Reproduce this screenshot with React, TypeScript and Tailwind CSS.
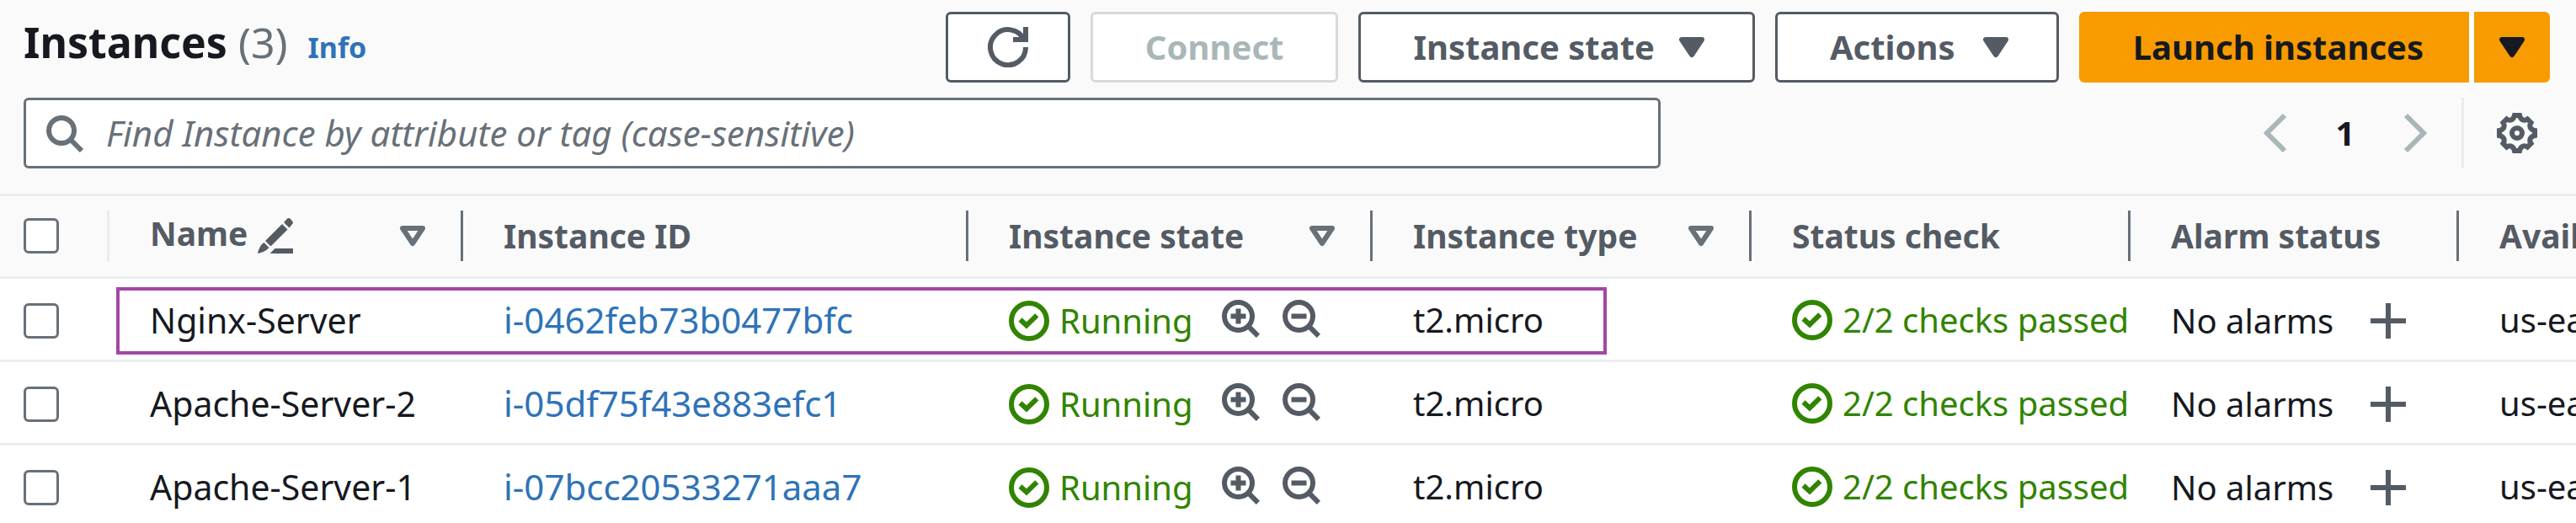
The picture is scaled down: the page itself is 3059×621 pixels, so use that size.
import type { ReactNode } from "react";

type Instance = { name: string; id: string };

const instances: Instance[] = [
  { name: "Nginx-Server", id: "i-0462feb73b0477bfc" },
  { name: "Apache-Server-2", id: "i-05df75f43e883efc1" },
  { name: "Apache-Server-1", id: "i-07bcc20533271aaa7" },
];

function Icon({ children, className = "" }: { children: ReactNode; className?: string }) {
  return (
    <svg
      viewBox="0 0 16 16"
      className={`size-12 shrink-0 ${className}`}
      fill="none"
      stroke="currentColor"
      strokeWidth={2}
      aria-hidden="true"
    >
      {children}
    </svg>
  );
}

function CaretIcon() {
  return (
    <Icon>
      <path d="M4 5h8l-4 6-4-6z" fill="currentColor" strokeLinejoin="round" />
    </Icon>
  );
}

function CheckIcon() {
  return (
    <Icon>
      <circle cx="8" cy="8" r="7" />
      <path d="m4.5 7.5 2.5 2.3 4.1-4" />
    </Icon>
  );
}

function GearIcon() {
  return (
    <Icon>
      <circle cx="8" cy="8" r="2" />
      <path d="M7 1h2C9.4 2.8 10.8 3.4 12.1 2.5L13.5 3.9C12.6 5.2 13.2 6.6 15 7V9C13.2 9.4 12.6 10.8 13.5 12.1L12.1 13.5C10.8 12.6 9.4 13.2 9 15H7C6.6 13.2 5.2 12.6 3.9 13.5L2.5 12.1C3.4 10.8 2.8 9.4 1 9V7C2.8 6.6 3.4 5.2 2.5 3.9L3.9 2.5C5.2 3.4 6.6 2.8 7 1z" />
    </Icon>
  );
}

function Checkbox({ label }: { label: string }) {
  return (
    <input
      type="checkbox"
      aria-label={label}
      className="ml-7 block size-[42px] appearance-none rounded-md border-3 border-[#687078] bg-white"
    />
  );
}

const outline =
  "flex h-[84px] items-center rounded-md border-3 border-[#545b64] bg-white font-bold text-[#545b64]";

function HeaderCell({
  children,
  filter,
  light,
}: {
  children: ReactNode;
  filter?: string;
  light?: boolean;
}) {
  return (
    <th scope="col" className="h-24 p-0 text-left font-bold">
      <div
        className={`flex h-[60px] items-center justify-between ${
          light ? "border-r-3 border-[#eaeded]" : "border-r-3 border-[#687078] pl-12 pr-[33px]"
        }`}
      >
        {children}
        {filter && (
          <button type="button" aria-label={filter} className="text-[#687078]">
            <Icon>
              <path d="M4 5h8l-4 6-4-6z" strokeLinejoin="round" />
            </Icon>
          </button>
        )}
      </div>
    </th>
  );
}

export default function App() {
  return (
    <main className="h-screen overflow-hidden bg-white font-['Noto_Sans',sans-serif] text-[40px] leading-[60px] text-[#16191f]">
      <header className="border-b-3 border-[#eaeded] bg-[#fafafa] pb-[30px] pl-7 pr-[31px] pt-3.5">
        <div className="flex items-center justify-between">
          <div className="flex items-baseline pb-1.5">
            <h1 className="text-[50px] font-bold">
              Instances <span className="font-normal text-[#687078]">(3)</span>
            </h1>
            <a href="#info" className="ml-6 text-[34px] font-bold text-[#2e73b8]">
              Info
            </a>
          </div>
          <div className="flex gap-6">
            <button type="button" aria-label="Refresh" className={`${outline} px-[47px]`}>
              <Icon>
                <path d="M10 5h5V0" />
                <path d="M15 8a7 7 0 1 1-.7-3" />
              </Icon>
            </button>
            <button
              type="button"
              disabled
              className="flex h-[84px] items-center rounded-md border-3 border-[#d5dbdb] bg-white px-[62px] font-bold text-[#aab7b8]"
            >
              Connect
            </button>
            <button type="button" className={`${outline} gap-5 pl-[62px] pr-12`}>
              Instance state
              <CaretIcon />
            </button>
            <button type="button" className={`${outline} gap-6 pl-[62px] pr-12`}>
              Actions
              <CaretIcon />
            </button>
            <div className="flex gap-1.5 bg-white">
              <button type="button" className="h-[84px] rounded-l-md bg-[#f79b00] pl-16 pr-[54px] font-bold">
                Launch instances
              </button>
              <button
                type="button"
                aria-label="More launch options"
                className="flex h-[84px] items-center rounded-r-md bg-[#f79b00] px-[21px]"
              >
                <CaretIcon />
              </button>
            </div>
          </div>
        </div>
        <div className="mt-[18px] flex items-center justify-between">
          <label className="flex h-[84px] w-[1944px] items-center gap-[26px] rounded-md border-3 border-[#687078] bg-white pl-[21px]">
            <Icon className="text-[#687078]">
              <circle cx="7" cy="7" r="5" />
              <path d="m15 15-4.5-4.5" />
            </Icon>
            <input
              type="search"
              aria-label="Find Instance by attribute or tag"
              placeholder="Find Instance by attribute or tag (case-sensitive)"
              className="grow text-[42px] outline-none placeholder:italic placeholder:text-[#687078]"
            />
          </label>
          <div className="flex items-center">
            <button type="button" disabled aria-label="Previous page" className="text-[#aab7b8]">
              <Icon>
                <path d="m12 1-7 7 7 7" />
              </Icon>
            </button>
            <button type="button" className="w-[120px] text-center font-bold">
              1
            </button>
            <button type="button" disabled aria-label="Next page" className="text-[#aab7b8]">
              <Icon>
                <path d="m4 1 7 7-7 7" />
              </Icon>
            </button>
            <div className="ml-[30px] flex h-[84px] items-center border-l-3 border-[#eaeded] pl-[39px] pr-[15px] text-[#545b64]">
              <button type="button" aria-label="Preferences">
                <GearIcon />
              </button>
            </div>
          </div>
        </div>
      </header>

      <table className="w-full table-fixed border-collapse whitespace-nowrap">
        <colgroup>
          <col className="w-[130px]" />
          <col className="w-[420px]" />
          <col className="w-[600px]" />
          <col className="w-[480px]" />
          <col className="w-[450px]" />
          <col className="w-[450px]" />
          <col className="w-[390px]" />
          <col />
        </colgroup>
        <thead className="bg-[#fafafa] text-[39px] text-[#545b64]">
          <tr className="border-b-3 border-[#eaeded]">
            <HeaderCell light>
              <Checkbox label="Select all instances" />
            </HeaderCell>
            <HeaderCell filter="Sort by name">
              <span className="flex items-center gap-3">
                <span className="pb-1.5">Name</span>
                <svg viewBox="0 0 42 42" className="size-[42px]" fill="currentColor" aria-hidden="true">
                  <path d="M35 .8c1.2-1 2.6-1 3.7 0l2.4 2.6c1 1.2 1 2.5 0 3.7L37.5 11.5 31 5z" />
                  <path d="M29 7l6.5 6.5L15.5 33.5 9 27z" />
                  <path d="M7.5 29l6 6c-3 3.5-8 6-13.5 7 1-5.5 3.5-10.5 7.5-13z" />
                  <path d="M20.500 36H42v6H14.500z" />
                </svg>
              </span>
            </HeaderCell>
            <HeaderCell>Instance ID</HeaderCell>
            <HeaderCell filter="Sort by instance state">Instance state</HeaderCell>
            <HeaderCell filter="Sort by instance type">Instance type</HeaderCell>
            <HeaderCell>Status check</HeaderCell>
            <HeaderCell>Alarm status</HeaderCell>
            <th scope="col" className="overflow-hidden p-0 pl-12 text-left font-bold">
              Availability Zone
            </th>
          </tr>
        </thead>
        <tbody>
          {instances.map((instance, index) => (
            <tr key={instance.id} className="h-[99px] border-b-3 border-[#eaeded]">
              <td className="p-0 pt-1">
                <Checkbox label={`Select ${instance.name}`} />
              </td>
              <td className="relative p-0 pl-12 pt-0.5 text-[41px]">
                {instance.name}
                {index === 0 && (
                  <div className="pointer-events-none absolute left-2 top-2.5 h-20 w-[1770px] border-4 border-[#a347a3]" />
                )}
              </td>
              <td className="p-0 pl-12 pt-0.5 text-[42px]">
                <a href={`#${instance.id}`} className="text-[#2e73b8]">
                  {instance.id}
                </a>
              </td>
              <td className="p-0 pl-12 pt-1">
                <div className="flex items-center text-[#545b64]">
                  <span className="flex w-[250px] items-center gap-3 text-[#318400]">
                    <CheckIcon />
                    Running
                  </span>
                  <button type="button" aria-label="Filter to this state" className="pb-2">
                    <Icon>
                      <circle cx="7.5" cy="7.5" r="5.5" />
                      <path d="m15.3 15.3-4-4M4.5 7.5h6M7.5 4.5v6" />
                    </Icon>
                  </button>
                  <button type="button" aria-label="Exclude this state" className="ml-6 pb-2">
                    <Icon>
                      <circle cx="7.5" cy="7.5" r="5.5" />
                      <path d="m15.3 15.3-4-4M4.5 7.5h6" />
                    </Icon>
                  </button>
                </div>
              </td>
              <td className="p-0 pl-12 pt-0.5">t2.micro</td>
              <td className="p-0 pl-12 pt-0.5">
                <div className="flex items-center gap-3 overflow-hidden text-[#318400]">
                  <CheckIcon />
                  2/2 checks passed
                </div>
              </td>
              <td className="p-0 pl-12 pt-1">
                <div className="flex items-center justify-between pr-[60px]">
                  No alarms
                  <button type="button" aria-label="Create alarm" className="text-[#545b64]">
                    <Icon>
                      <path d="M1 8h14M8 1v14" />
                    </Icon>
                  </button>
                </div>
              </td>
              <td className="overflow-hidden p-0 pl-12 pt-0.5">us-east-1a</td>
            </tr>
          ))}
        </tbody>
      </table>
    </main>
  );
}
